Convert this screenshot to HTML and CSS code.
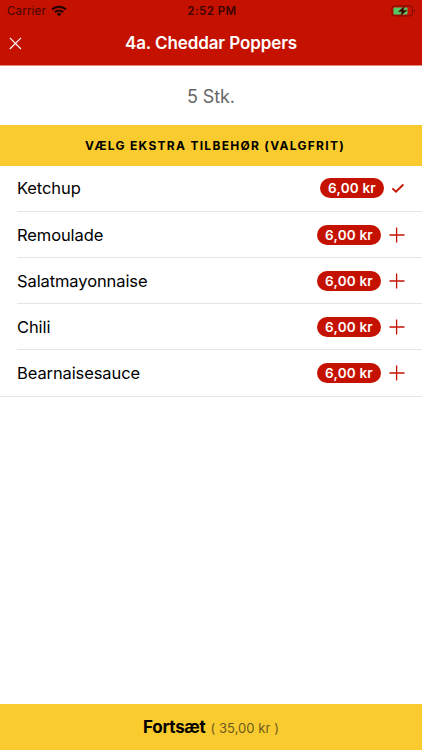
FILE: index.html
```html
<!DOCTYPE html>
<html lang="da">
<head>
<meta charset="utf-8">
<title>4a. Cheddar Poppers</title>
<link rel="stylesheet" href="styles.css">
</head>
<body>
<div class="screen">
  <header class="header">
    <div class="status">
      <div class="carrier"><span>Carrier</span>
        <svg class="wifi" width="16" height="12" viewBox="0 0 16 12" fill="none" stroke="currentColor" stroke-width="2.1"><path d="M1.1 4.6a9.8 9.8 0 0 1 13.8 0M3.8 7.3a6 6 0 0 1 8.4 0"/><path d="M8 11.3 5.6 8.9a3.4 3.4 0 0 1 4.8 0Z" fill="currentColor" stroke="none"/></svg>
      </div>
      <time class="clock">2:52 PM</time>
      <svg class="battery" width="26" height="12" viewBox="0 0 26 12"><rect x="1" y=".9" width="20.5" height="10" rx="2.7" fill="none" stroke="#7c0b00"/><rect x="2.5" y="2.4" width="14" height="7" rx="1.2" fill="#4fcb68"/><path d="M23 4.2v3.4c1.4-.6 1.4-2.8 0-3.4Z" fill="#7c0b00"/><path d="M13.7 1 7.1 6.7h3.8L9.3 11l6.9-5.8h-3.9Z" fill="#240900" stroke="#a51905" stroke-width=".4"/></svg>
    </div>
    <div class="nav">
      <svg class="close" width="13" height="13" viewBox="0 0 13 13" fill="none" stroke="#fff" stroke-width="1.15"><path d="m.8.8 11.2 11.2M12 .8.8 12"/></svg>
      <h1 class="title">4a. Cheddar Poppers</h1>
      <span></span>
    </div>
  </header>
  <p class="amount">5 Stk.</p>
  <h2 class="section">VÆLG EKSTRA TILBEHØR (VALGFRIT)</h2>
  <ul class="options">
    <li class="option"><div class="row"><span class="name">Ketchup</span><span class="price">6,00 kr</span><svg class="check" width="14" height="12" viewBox="0 0 14 12" fill="none" stroke="#c51200" stroke-width="1.8"><path d="m1.4 6.4 3.5 3.3 7.5-7.2"/></svg></div></li>
    <li class="option"><div class="row"><span class="name">Remoulade</span><span class="price">6,00 kr</span><svg class="plus" width="16" height="16" viewBox="0 0 16 16" fill="none" stroke="#c51200" stroke-width="1.3"><path d="M.5 8h15M7.6.5v15"/></svg></div></li>
    <li class="option"><div class="row"><span class="name">Salatmayonnaise</span><span class="price">6,00 kr</span><svg class="plus" width="16" height="16" viewBox="0 0 16 16" fill="none" stroke="#c51200" stroke-width="1.3"><path d="M.5 8h15M7.6.5v15"/></svg></div></li>
    <li class="option"><div class="row"><span class="name">Chili</span><span class="price">6,00 kr</span><svg class="plus" width="16" height="16" viewBox="0 0 16 16" fill="none" stroke="#c51200" stroke-width="1.3"><path d="M.5 8h15M7.6.5v15"/></svg></div></li>
    <li class="option"><div class="row"><span class="name">Bearnaisesauce</span><span class="price">6,00 kr</span><svg class="plus" width="16" height="16" viewBox="0 0 16 16" fill="none" stroke="#c51200" stroke-width="1.3"><path d="M.5 8h15M7.6.5v15"/></svg></div></li>
  </ul>
  <footer class="footer"><strong class="continue">Fortsæt</strong><span class="total">( 35,00 kr )</span></footer>
</div>
</body>
</html>
```
FILE: styles.css
```css
* { box-sizing: border-box; }
body, h1, h2, p, ul { margin: 0; padding: 0; }
body { background: #fff; color: #000; font-family: Inter, "Liberation Sans", sans-serif; }
.screen { display: flex; flex-direction: column; width: 422px; height: 750px; overflow: hidden; }
.header { height: 65px; background: #c51200; box-shadow: 0 1px #e68a80; }
.status { display: grid; grid-template-columns: 1fr auto 1fr; align-items: center; height: 22px; padding: 0 5px 0 7px; color: #420600; }
.carrier { display: flex; align-items: center; gap: 5px; font-size: 11.5px; letter-spacing: .18px; }
.wifi { color: #250300; }
.clock { font-size: 11.5px; font-weight: 600; letter-spacing: .45px; color: #390500; }
.battery { justify-self: end; }
.nav { display: grid; grid-template-columns: 1fr auto 1fr; align-items: center; height: 43px; padding: 0 9px; }
.title { margin-top: -2px; color: #fff; font-size: 17px; line-height: 22px; font-weight: 600; letter-spacing: -.1px; }
.amount { height: 60px; padding-top: 2px; line-height: 60px; text-align: center; color: #666; font-size: 18px; letter-spacing: -.1px; }
.section { height: 40.5px; padding-left: 8px; background: #facb2e; text-align: center; font-size: 12px; line-height: 41px; font-weight: 700; letter-spacing: 1.29px; }
.options { list-style: none; }
.option { height: 46.2px; padding-left: 17px; }
.row { display: flex; align-items: center; height: 100%; padding: .8px 17px 0 0; border-bottom: 1px solid #e5e5e5; }
.option:last-child { height: 46.4px; padding-left: 0; }
.option:last-child .row { padding-left: 17px; }
.name { flex: 1; font-size: 16.5px; letter-spacing: -.1px; }
.price { width: 64px; height: 20px; border-radius: 10px; background: #c51200; color: #fff; font-size: 13.5px; line-height: 20px; font-weight: 600; text-align: center; letter-spacing: .2px; }
.plus { margin-left: 8px; }
.check { margin-left: 7px; }
.footer { display: flex; justify-content: center; align-items: baseline; gap: 5px; height: 46px; margin-top: auto; background: #facb2e; line-height: 47px; }
.continue { font-size: 17px; font-weight: 700; letter-spacing: -.3px; }
.total { color: #6b5a20; font-size: 13px; letter-spacing: .05px; }
```
